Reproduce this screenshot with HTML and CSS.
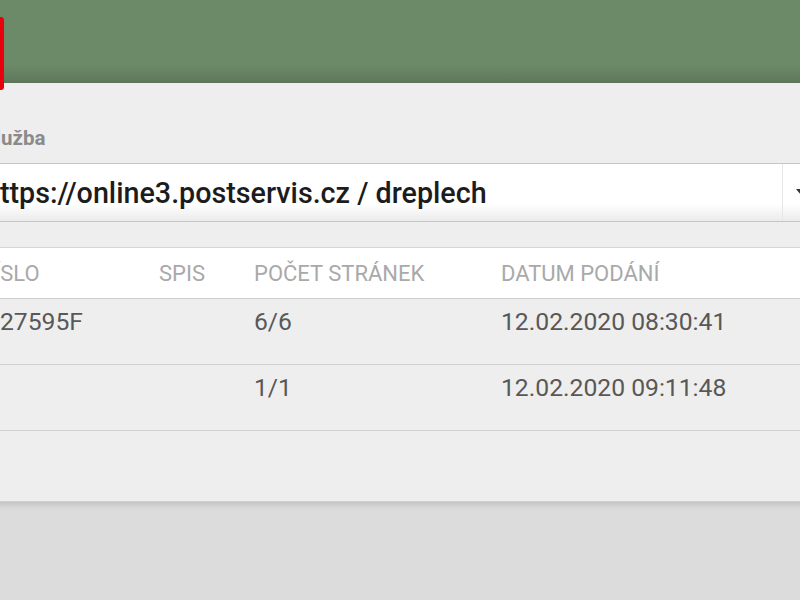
FILE: index.html
```html
<!DOCTYPE html>
<html lang="cs">
<head>
<meta charset="utf-8">
<title>Služba</title>
<link rel="stylesheet" href="styles.css">
</head>
<body>
<header class="topbar">
  <div class="logo"></div>
</header>
<main class="panel">
  <div class="field-label">Služba</div>
  <div class="select">
    <span class="select-value">https://online3.postservis.cz / dreplech</span>
    <span class="select-arrow">
      <svg width="10" height="6" viewBox="0 0 10 6"><path d="M0 0 L10 0 L5 6 Z" fill="#333"/></svg>
    </span>
  </div>
  <table class="grid">
    <colgroup>
      <col class="c-num"><col class="c-spis"><col class="c-pages"><col class="c-date">
    </colgroup>
    <thead>
      <tr><th class="first">ČÍSLO</th><th>SPIS</th><th>POČET STRÁNEK</th><th>DATUM PODÁNÍ</th></tr>
    </thead>
    <tbody>
      <tr><td class="first">27595F</td><td></td><td>6/6</td><td>12.02.2020 08:30:41</td></tr>
      <tr><td class="first"></td><td></td><td>1/1</td><td>12.02.2020 09:11:48</td></tr>
    </tbody>
  </table>
</main>
</body>
</html>
```

FILE: styles.css
```css
html, body {
  margin: 0;
  padding: 0;
  background: #dcdcdc;
  overflow: hidden;
  height: 600px;
}
body {
  font-family: Roboto, "Liberation Sans", sans-serif;
}
.topbar {
  position: relative;
  height: 83px;
  background: linear-gradient(to bottom, #6c8a68 0, #6c8a68 78%, #5e775b 100%);
}
.logo {
  position: absolute;
  left: -60px;
  top: 17px;
  width: 64px;
  height: 73px;
  background: #e8000d;
  border-radius: 3px;
  z-index: 2;
}
.panel {
  position: relative;
  margin-left: -40px;
  width: 900px;
  padding: 43px 0 70px;
  background: #eeeeee;
  border-bottom: 1px solid #d0d0d0;
  box-shadow: 0 3px 6px rgba(0, 0, 0, 0.12);
}
.field-label {
  padding-left: 23px;
  font-size: 20.5px;
  line-height: 24px;
  font-weight: 700;
  color: #8a8a8a;
  margin-bottom: 13px;
}
.select {
  display: flex;
  align-items: stretch;
  width: 870px;
  height: 57px;
  border-top: 1px solid #c6c6c6;
  border-bottom: 1px solid #c6c6c6;
  background: linear-gradient(to bottom, #ffffff 0, #ffffff 70%, #ebebeb 100%);
}
.select-value {
  flex: 1;
  display: flex;
  align-items: center;
  padding-left: 24px;
  font-size: 28.7px;
  font-weight: 500;
  color: #1c1c1c;
}
.select-arrow {
  width: 48px;
  display: flex;
  align-items: center;
  padding-left: 13px;
  box-sizing: border-box;
  border-left: 1px solid #e6e6e6;
  padding-bottom: 2px;
}
.grid {
  margin-top: 25px;
  width: 900px;
  border-collapse: collapse;
  table-layout: fixed;
}
.c-num { width: 179px; }
.c-spis { width: 95px; }
.c-pages { width: 247px; }
.grid thead tr {
  background: #ffffff;
  border-top: 1px solid #d6d6d6;
  border-bottom: 1px solid #cfcfcf;
}
.grid th {
  height: 50px;
  padding: 0 0 0 20px;
  text-align: left;
  vertical-align: middle;
  font-size: 22px;
  font-weight: 400;
  color: #a9a9a9;
}
.grid tbody tr {
  border-bottom: 1px solid #cfcfcf;
}
.grid td {
  height: 66px;
  padding: 9px 0 0 20px;
  box-sizing: border-box;
  vertical-align: top;
  font-size: 24.7px;
  line-height: 28px;
  color: #585858;
}
.grid .first {
  padding-left: 20px;
}
.grid td.first {
  padding-left: 40px;
}
```
